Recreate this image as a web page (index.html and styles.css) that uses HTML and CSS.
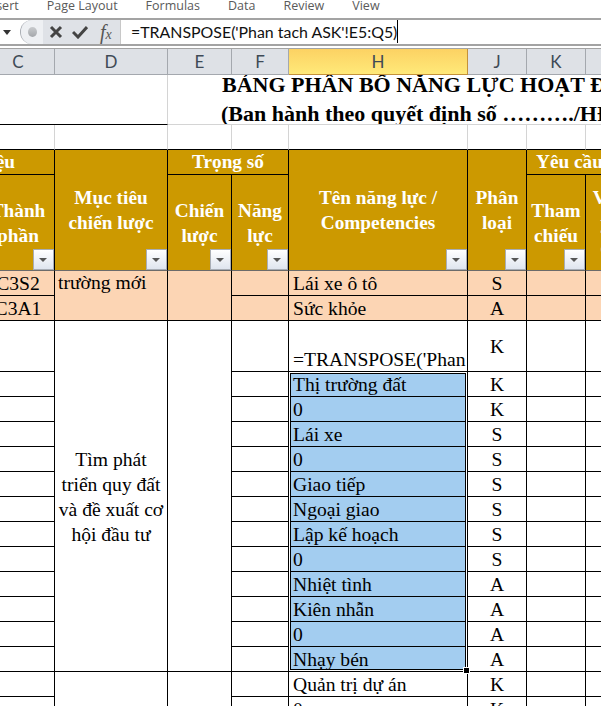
FILE: index.html
```html
<!DOCTYPE html>
<html lang="vi">
<head>
  <meta charset="UTF-8" />
  <title>Phan tach ASK</title>
  <link rel="stylesheet" href="styles.css">
</head>
<body>
  <div class="tabs">
    <span class="tab first">Insert</span>
    <span class="tab">Page Layout</span>
    <span class="tab">Formulas</span>
    <span class="tab">Data</span>
    <span class="tab">Review</span>
    <span class="tab">View</span>
  </div>

  <div class="formula-bar">
    <div class="name-arrow"><span class="arrow"></span></div>
    <div class="fx-group">
      <span class="grip"><span class="dot"></span></span>
      <svg class="fx-icon" width="14" height="14" viewBox="0 0 14 14"><path d="M2 2 L12 12 M12 2 L2 12" stroke="#444" stroke-width="3" fill="none"/></svg>
      <svg class="fx-icon check" width="16" height="14" viewBox="0 0 16 14"><path d="M1 7 L6 12 L15 2" stroke="#444" stroke-width="3" fill="none"/></svg>
      <span class="fx-label">f<small>x</small></span>
    </div>
    <div class="formula-input"><span class="formula-text">=TRANSPOSE('Phan tach ASK'!E5:Q5)</span></div>
  </div>

  <div class="sheet">
    <table class="grid">
      <colgroup>
        <col class="c-b"><col class="c-c"><col class="c-d"><col class="c-e"><col class="c-f"><col class="c-h"><col class="c-j"><col class="c-k"><col class="c-l">
      </colgroup>
      <tr class="col-heads">
        <th></th><th>C</th><th>D</th><th>E</th><th>F</th><th class="active">H</th><th>J</th><th>K</th><th>L</th>
      </tr>

      <tr>
        <td class="blank-top" colspan="3" rowspan="2"></td>
        <td class="title big" colspan="6">BẢNG PHÂN BỔ NĂNG LỰC HOẠT ĐỘNG</td>
      </tr>
      <tr>
        <td class="title sub" colspan="6">(Ban hành theo quyết định số ………./HĐ</td>
      </tr>
      <tr class="spacer">
        <td></td><td></td><td></td><td></td><td></td><td></td><td></td><td></td><td></td>
      </tr>

      <tr class="gold">
        <td colspan="2" class="group group-left">Dữ liệu</td>
        <td rowspan="2" class="head-tall">Mục tiêu<br>chiến lược<span class="filter"></span></td>
        <td colspan="2" class="group">Trọng số</td>
        <td rowspan="2" class="head-tall">Tên năng lực /<br>Competencies<span class="filter"></span></td>
        <td rowspan="2" class="head-tall">Phân<br>loại<span class="filter"></span></td>
        <td colspan="2" class="group group-need">Yêu cầu</td>
      </tr>
      <tr class="gold tall">
        <td></td>
        <td class="head-tall">Thành<br>phần<span class="filter"></span></td>
        <td class="head-tall">Chiến<br>lược<span class="filter"></span></td>
        <td class="head-tall">Năng<br>lực<span class="filter"></span></td>
        <td class="head-tall">Tham<br>chiếu<span class="filter"></span></td>
        <td class="head-tall">Vị trí<br>yêu cầu<span class="filter"></span></td>
      </tr>

      <tr class="peach">
        <td></td><td class="mid">C3S2</td><td class="txt top" rowspan="2">trường mới</td><td rowspan="2"></td><td></td><td class="txt">Lái xe ô tô</td><td class="mid">S</td><td></td><td></td>
      </tr>
      <tr class="peach">
        <td></td><td class="mid">C3A1</td><td></td><td class="txt">Sức khỏe</td><td class="mid">A</td><td></td><td></td>
      </tr>

      <tr class="row-tall">
        <td></td><td></td>
        <td class="goal" rowspan="13">Tìm phát<br>triển quy đất<br>và đề xuất cơ<br>hội đầu tư</td>
        <td rowspan="13"></td>
        <td></td><td class="txt bottom">=TRANSPOSE('Phan</td><td class="mid">K</td><td></td><td></td>
      </tr>
      <tr><td></td><td></td><td></td><td class="txt sel">Thị trường đất</td><td class="mid">K</td><td></td><td></td></tr>
      <tr><td></td><td></td><td></td><td class="txt sel">0</td><td class="mid">K</td><td></td><td></td></tr>
      <tr><td></td><td></td><td></td><td class="txt sel">Lái xe</td><td class="mid">S</td><td></td><td></td></tr>
      <tr><td></td><td></td><td></td><td class="txt sel">0</td><td class="mid">S</td><td></td><td></td></tr>
      <tr><td></td><td></td><td></td><td class="txt sel">Giao tiếp</td><td class="mid">S</td><td></td><td></td></tr>
      <tr><td></td><td></td><td></td><td class="txt sel">Ngoại giao</td><td class="mid">S</td><td></td><td></td></tr>
      <tr><td></td><td></td><td></td><td class="txt sel">Lập kế hoạch</td><td class="mid">S</td><td></td><td></td></tr>
      <tr><td></td><td></td><td></td><td class="txt sel">0</td><td class="mid">S</td><td></td><td></td></tr>
      <tr><td></td><td></td><td></td><td class="txt sel">Nhiệt tình</td><td class="mid">A</td><td></td><td></td></tr>
      <tr><td></td><td></td><td></td><td class="txt sel">Kiên nhẫn</td><td class="mid">A</td><td></td><td></td></tr>
      <tr><td></td><td></td><td></td><td class="txt sel">0</td><td class="mid">A</td><td></td><td></td></tr>
      <tr><td></td><td></td><td></td><td class="txt sel">Nhạy bén</td><td class="mid">A</td><td></td><td></td></tr>

      <tr>
        <td></td><td></td><td rowspan="2"></td><td rowspan="2"></td><td></td><td class="txt">Quản trị dự án</td><td class="mid">K</td><td></td><td></td>
      </tr>
      <tr><td></td><td></td><td></td><td class="txt">0</td><td class="mid">K</td><td></td><td></td></tr>
    </table>

    <div class="selection"><span class="handle"></span></div>
  </div>
</body>
</html>
```

FILE: styles.css
```css
* {
  box-sizing: border-box;
}

html, body {
  height: 100%;
}

body {
  margin: 0;
  background: #fff;
  overflow: hidden;
  font-family: "Liberation Serif", serif;
  color: #000;
}

/* ribbon tabs, cut off by the top of the shot */
.tabs {
  display: flex;
  gap: 28px;
  height: 20px;
  border-bottom: 2px solid #a3a3a3;
  overflow: hidden;
  font-family: "Open Sans", sans-serif;
  font-size: 12.5px;
  line-height: 12px;
  color: #5a5a5a;
  white-space: nowrap;
}

.tab.first {
  margin-left: -15px;
}

/* formula bar */
.formula-bar {
  display: flex;
  height: 26px;
  border-bottom: 2px solid #a3a3a3;
}

.name-arrow {
  width: 20px;
  display: flex;
  align-items: center;
  padding-left: 3px;
}

.arrow {
  width: 0;
  height: 0;
  border-left: 4px solid transparent;
  border-right: 4px solid transparent;
  border-top: 5px solid #333;
}

.fx-group {
  width: 100px;
  display: flex;
  align-items: center;
  background: #dfe2e7;
  border-radius: 12px 0 0 12px;
  border-left: 1px solid #a9adb3;
}

.grip {
  width: 22px;
  height: 24px;
  background: #eef0f3;
  border-radius: 12px 0 0 12px;
  display: flex;
  align-items: center;
  justify-content: center;
}

.dot {
  width: 9px;
  height: 10px;
  border-radius: 50%;
  background: linear-gradient(#c9cbce, #a4a7ab);
}

.fx-icon {
  margin-left: 6px;
  flex: none;
}

.fx-icon.check {
  margin-left: 9px;
}

.fx-label {
  margin-left: 12px;
  font-style: italic;
  font-size: 20px;
  color: #555;
}

.fx-label small {
  font-size: 14px;
}

.formula-input {
  flex: 1;
  padding-left: 10px;
  border-left: 1px solid #c8c8c8;
  font-family: "Lato", sans-serif;
  font-size: 15.9px;
  line-height: 24px;
  color: #111;
}

.formula-text {
  display: inline-block;
  height: 23px;
  border-right: 1px solid #000;
}

/* sheet */
.sheet {
  position: relative;
  margin-top: 2px;
  border-top: 1px solid #a3a3a3;
  height: 660px;
  overflow: hidden;
}

.grid {
  table-layout: fixed;
  width: 745px;
  margin-left: -100px;
  border-collapse: separate;
  border-spacing: 0;
}

.c-b { width: 82px; }
.c-c { width: 73px; }
.c-d { width: 113px; }
.c-e { width: 64px; }
.c-f { width: 57px; }
.c-h { width: 179px; }
.c-j { width: 59px; }
.c-k { width: 59px; }
.c-l { width: 59px; }

.grid td {
  height: 25px;
  padding: 2px 0 0;
  border-right: 1px solid #000;
  border-bottom: 1px solid #000;
  font-size: 19.6px;
  line-height: 22px;
  overflow: hidden;
  white-space: nowrap;
}

.col-heads th {
  height: 26px;
  padding: 0;
  background: #dee1e6;
  border-right: 1px solid #a4a8ae;
  border-bottom: 1px solid #a4a8ae;
  font-family: "Lato", sans-serif;
  font-size: 17px;
  font-weight: 400;
  color: #3f4a56;
}

.col-heads th.active {
  background: linear-gradient(#fcd263, #ffe979);
  border-right-color: #c4913a;
  border-bottom-color: #c4913a;
}

.grid td.blank-top {
  border-right-color: #d4d4d4;
}

.grid td.title {
  border-right: none;
  border-bottom: none;
  font-weight: 700;
  font-size: 22px;
  line-height: 20px;
  vertical-align: top;
}

.grid td.big {
  padding: 0 0 0 54px;
}

.grid td.sub {
  padding: 4px 0 0 53px;
  border-bottom: 1px solid #d4d4d4;
}

.spacer td {
  border-right-color: #d4d4d4;
}

.grid .gold td {
  position: relative;
  padding: 0;
  background: #cc9900;
  color: #fff;
  font-weight: 700;
  text-align: center;
  font-size: 19.3px;
  line-height: 25px;
  white-space: normal;
}

.grid .gold td.group {
  line-height: 24px;
  white-space: nowrap;
}

.grid .gold td.head-tall {
  border-bottom-color: #6b6b6b;
}

.grid .tall td {
  height: 96px;
  border-bottom-color: #6b6b6b;
}

.grid .gold td.group-left {
  text-align: right;
  padding-right: 39px;
}

.grid .gold td.group-need {
  text-align: left;
  padding-left: 9px;
}

.filter {
  position: absolute;
  right: 0;
  bottom: 0;
  width: 21px;
  height: 21px;
  border: 1px solid #a8adb5;
  background: linear-gradient(#fff, #dfe5ef);
}

.filter::after {
  content: "";
  position: absolute;
  left: 5px;
  top: 8px;
  border-left: 4px solid transparent;
  border-right: 4px solid transparent;
  border-top: 4px solid #555;
}

.peach td {
  background: #fcd5b4;
}

.grid .row-tall td {
  height: 51px;
}

.grid td.txt {
  padding-left: 4px;
}

.grid td.top {
  vertical-align: top;
  padding: 1px 0 0 3px;
}

.grid td.bottom {
  vertical-align: bottom;
  padding-bottom: 0;
}

.grid td.mid,
.grid td.goal {
  text-align: center;
}

.grid td.goal {
  line-height: 25px;
}

.grid td.sel {
  background: #a3cdf0;
}

/* selected range drawn over the H cells */
.selection {
  position: absolute;
  left: 289px;
  top: 323px;
  width: 178px;
  height: 299px;
  border: 1px solid #fff;
  box-shadow: inset 0 0 0 1px #000;
}

.handle {
  position: absolute;
  right: -4px;
  bottom: -4px;
  width: 7px;
  height: 7px;
  background: #000;
  border: 1px solid #fff;
}
```
